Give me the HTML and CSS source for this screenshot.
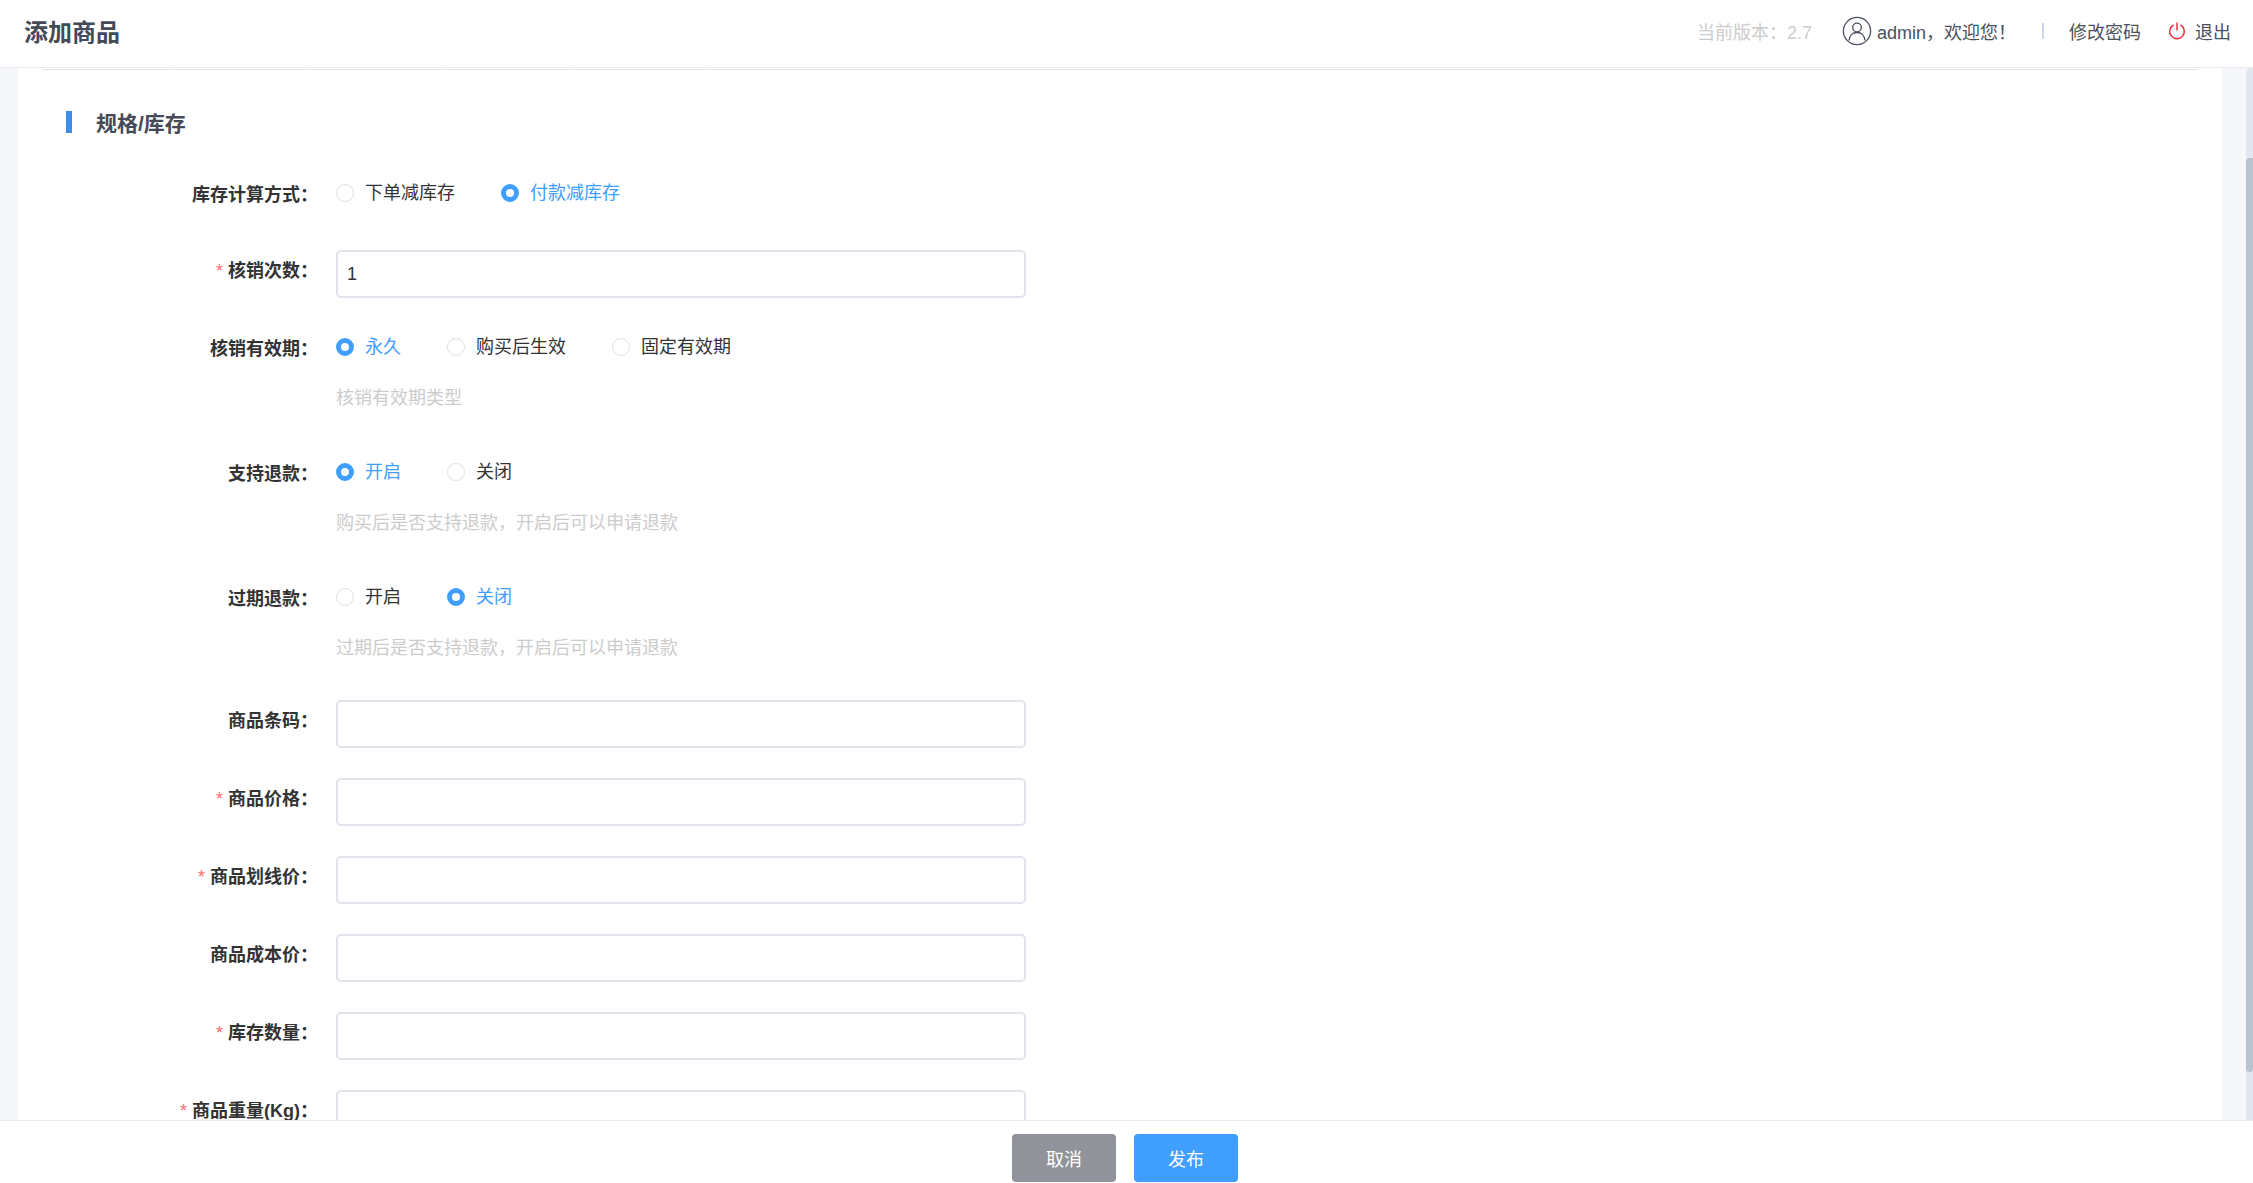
FILE: index.html
```html
<!DOCTYPE html>
<html lang="zh-CN">
<head>
<meta charset="utf-8">
<title>添加商品</title>
<link rel="stylesheet" href="styles.css">
</head>
<body>
<div class="app">
  <header class="topbar">
    <h1 class="page-title">添加商品</h1>
    <div class="top-actions">
      <span class="version">当前版本：2.7</span>
      <span class="user">
        <svg class="user-icon" viewBox="0 0 30 30" width="30" height="30" fill="none" stroke="#4a5060" stroke-width="1.3">
          <circle cx="15" cy="15" r="13.6"/>
          <circle cx="15" cy="11.5" r="4.3"/>
          <path d="M7 24.500c.4-4.800 3.600-8 8-8s7.600 3.200 8 8"/>
        </svg>
        <span>admin，欢迎您！</span>
      </span>
      <span class="sep"></span>
      <span class="link">修改密码</span>
      <span class="logout">
        <svg viewBox="0 0 18 18" width="18" height="18" fill="none" stroke="#f5222d" stroke-width="1.4" stroke-linecap="round">
          <path d="M5.200 3.200a7.300 7.300 0 1 0 7.600 0"/>
          <path d="M9 .9v7.200"/>
        </svg>
        <span>退出</span>
      </span>
    </div>
  </header>

  <div class="workspace">
    <main class="card">
      <div class="tab-line"></div>
      <div class="section-head"><i class="section-bar"></i><span>规格/库存</span></div>
      <form class="form">
        <div class="row row-radio">
          <label class="label">库存计算方式：</label>
          <div class="radios">
            <span class="radio"><i class="dot"></i>下单减库存</span>
            <span class="radio on"><i class="dot"></i>付款减库存</span>
          </div>
        </div>
        <div class="row row-input gap-a">
          <label class="label req">核销次数：</label>
          <div class="input">1</div>
        </div>
        <div class="row row-radio gap-b">
          <label class="label">核销有效期：</label>
          <div class="radios">
            <span class="radio on"><i class="dot"></i>永久</span>
            <span class="radio"><i class="dot"></i>购买后生效</span>
            <span class="radio"><i class="dot"></i>固定有效期</span>
          </div>
        </div>
        <p class="tip">核销有效期类型</p>
        <div class="row row-radio gap-c">
          <label class="label">支持退款：</label>
          <div class="radios">
            <span class="radio on"><i class="dot"></i>开启</span>
            <span class="radio"><i class="dot"></i>关闭</span>
          </div>
        </div>
        <p class="tip">购买后是否支持退款，开启后可以申请退款</p>
        <div class="row row-radio gap-c">
          <label class="label">过期退款：</label>
          <div class="radios">
            <span class="radio"><i class="dot"></i>开启</span>
            <span class="radio on"><i class="dot"></i>关闭</span>
          </div>
        </div>
        <p class="tip">过期后是否支持退款，开启后可以申请退款</p>
        <div class="row row-input gap-d">
          <label class="label">商品条码：</label>
          <div class="input"></div>
        </div>
        <div class="row row-input">
          <label class="label req">商品价格：</label>
          <div class="input"></div>
        </div>
        <div class="row row-input">
          <label class="label req">商品划线价：</label>
          <div class="input"></div>
        </div>
        <div class="row row-input">
          <label class="label">商品成本价：</label>
          <div class="input"></div>
        </div>
        <div class="row row-input">
          <label class="label req">库存数量：</label>
          <div class="input"></div>
        </div>
        <div class="row row-input">
          <label class="label req">商品重量(Kg)：</label>
          <div class="input"></div>
        </div>
      </form>
    </main>
    <div class="scrollbar"><div class="thumb"></div></div>
  </div>

  <footer class="footer">
    <button class="btn btn-grey" type="button">取消</button>
    <button class="btn btn-blue" type="button">发布</button>
  </footer>
</div>
</body>
</html>
```
FILE: styles.css
```css
* { box-sizing: border-box; }
html, body { margin: 0; height: 100%; overflow: hidden; }
body {
  font-family: "Liberation Sans", "Noto Sans CJK SC", sans-serif;
  font-size: 18px;
  color: #333;
  background: #fff;
}
.app { height: 1183px; display: flex; flex-direction: column; }

.topbar {
  height: 68px;
  flex: none;
  display: flex;
  align-items: center;
  justify-content: space-between;
  padding: 0 22px 2px 24px;
  background: #fff;
  border-bottom: 1px solid #ececf0;
}
.page-title { margin: 0; font-size: 24px; font-weight: 700; color: #444a58; line-height: 32px; }
.top-actions { display: flex; align-items: center; color: #4a5060; padding-bottom: 3px; }
.version { color: #cccccc; margin-right: 30px; }
.user { display: flex; align-items: center; gap: 5px; }
.user-icon { display: block; }
.sep { width: 2px; height: 16px; background: #cfd8ea; margin: 0 25px 0 26px; }
.logout { display: flex; align-items: center; gap: 9px; margin-left: 27px; }
.logout svg { display: block; }

.workspace { flex: 1; min-height: 0; display: flex; background: #f5f7fb; padding-left: 18px; overflow: hidden; }
.card { width: 2204px; flex: none; background: #fff; overflow: hidden; padding: 0 24px 0 25px; }
.tab-line {
  height: 2px;
  margin: 0 0 40px -1px;
  border-bottom: 1px solid #e4e4ec;
  background: repeating-linear-gradient(to right, #e4e4ec 0 1px, transparent 1px 133px) no-repeat 0 0 / 666px 1px;
}
.section-head {
  display: flex;
  align-items: center;
  height: 24px;
  margin-left: 23px;
  font-size: 21px;
  font-weight: 700;
  color: #444a58;
}
.section-bar { width: 6px; height: 22px; background: #3b8eea; margin-right: 24px; }
.scrollbar { margin-left: 24px; width: 7px; flex: none; background: #e2e7ef; border-radius: 4px 0 0 0; }
.thumb { margin-top: 90px; height: 914px; background: #b9c3cf; border-radius: 4px 0 4px 4px; }

.form { padding-top: 47px; }
.row { display: flex; }
.row-input { margin-bottom: 30px; align-items: flex-start; }
.label {
  width: 293px;
  flex: none;
  padding-right: 18px;
  font-weight: 700;
  text-align: right;
  color: #333;
  line-height: 24px;
}
.req::before { content: "*"; color: #ff6b6b; font-weight: 400; margin-right: 5px; }
.row-input .label { padding-top: 9px; }
.row-radio { align-items: flex-start; height: 28px; }
.row-radio .label { padding-top: 2px; }
.radios { display: flex; gap: 46px; line-height: 24px; }
.radio { display: flex; align-items: center; gap: 11px; color: #333; }
.radio .dot { width: 18px; height: 18px; border-radius: 50%; border: 1px solid #dcdfe6; background: #fff; flex: none; }
.radio.on { color: #409eff; }
.radio.on .dot { border: 5px solid #409eff; }
.input {
  width: 690px;
  height: 48px;
  border: 2px solid #e1e4ec;
  border-radius: 5px;
  background: #fff;
  padding: 0 9px;
  line-height: 44px;
  color: #333;
}
.tip { margin: 0 0 0 293px; color: #cccccc; line-height: 24px; }

.gap-a { margin-top: 41px; }
.gap-b { margin-top: 37px; }
.gap-c { margin-top: 50px; }
.gap-d { margin-top: 40px; }
.row-radio + .tip { margin-top: 23px; }

.footer {
  flex: none;
  height: 63px;
  display: flex;
  justify-content: center;
  gap: 18px;
  padding: 13px 3px 0 0;
  background: #fff;
  border-top: 1px solid #ececf0;
}
.btn {
  width: 104px;
  height: 48px;
  border: 0;
  border-radius: 4px;
  color: #fff;
  font: 18px "Liberation Sans", "Noto Sans CJK SC", sans-serif;
}
.btn-grey { background: #909399; }
.btn-blue { background: #409eff; }
```
